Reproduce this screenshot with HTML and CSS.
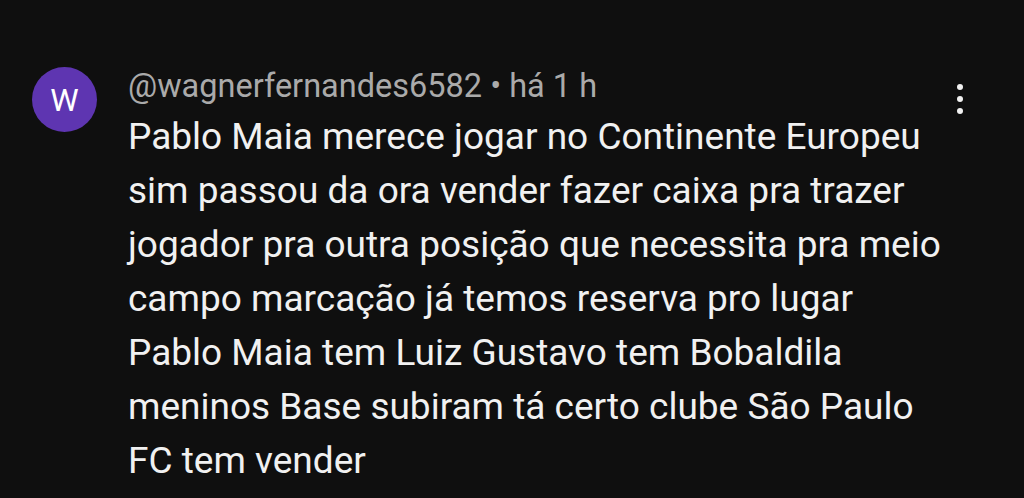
FILE: index.html
```html
<!DOCTYPE html>
<html>
<head>
<meta charset="utf-8">
<link rel="stylesheet" href="styles.css">
</head>
<body>
<div class="comment">
  <div class="avatar">W</div>
  <div class="content">
    <div class="meta">@wagnerfernandes6582 • há 1 h</div>
    <div class="text">Pablo Maia merece jogar no Continente Europeu<br>sim passou da ora vender fazer caixa pra trazer<br>jogador pra outra posição que necessita pra meio<br>campo marcação já temos reserva pro lugar<br>Pablo Maia tem Luiz Gustavo tem Bobaldila<br>meninos Base subiram tá certo clube São Paulo<br>FC tem vender</div>
  </div>
  <div class="menu">
    <svg width="8" height="32" viewBox="0 0 8 32"><circle cx="4" cy="4" r="3" fill="#f1f1f1"/><circle cx="4" cy="16" r="3" fill="#f1f1f1"/><circle cx="4" cy="28" r="3" fill="#f1f1f1"/></svg>
  </div>
</div>
</body>
</html>
```
FILE: styles.css
```css
html, body {
  margin: 0;
  padding: 0;
  background: #0f0f0f;
  height: 100%;
}
body {
  font-family: Roboto, "Noto Sans", sans-serif;
  overflow: hidden;
}
.comment {
  display: flex;
  align-items: flex-start;
  padding: 62px 0 0 32px;
}
.avatar {
  flex: 0 0 65px;
  width: 65px;
  height: 65px;
  margin-top: 5px;
  border-radius: 50%;
  background: #5e35b1;
  color: #fff;
  font-size: 32px;
  display: flex;
  align-items: center;
  justify-content: center;
}
.content {
  flex: 1;
  margin-left: 31px;
}
.meta {
  color: #aaaaaa;
  font-size: 32.5px;
  line-height: 48px;
}
.text {
  color: #f1f1f1;
  font-size: 37px;
  line-height: 54px;
  white-space: nowrap;
}
.menu {
  margin: 21px 60px 0 0;
}
.menu svg {
  display: block;
}
```
